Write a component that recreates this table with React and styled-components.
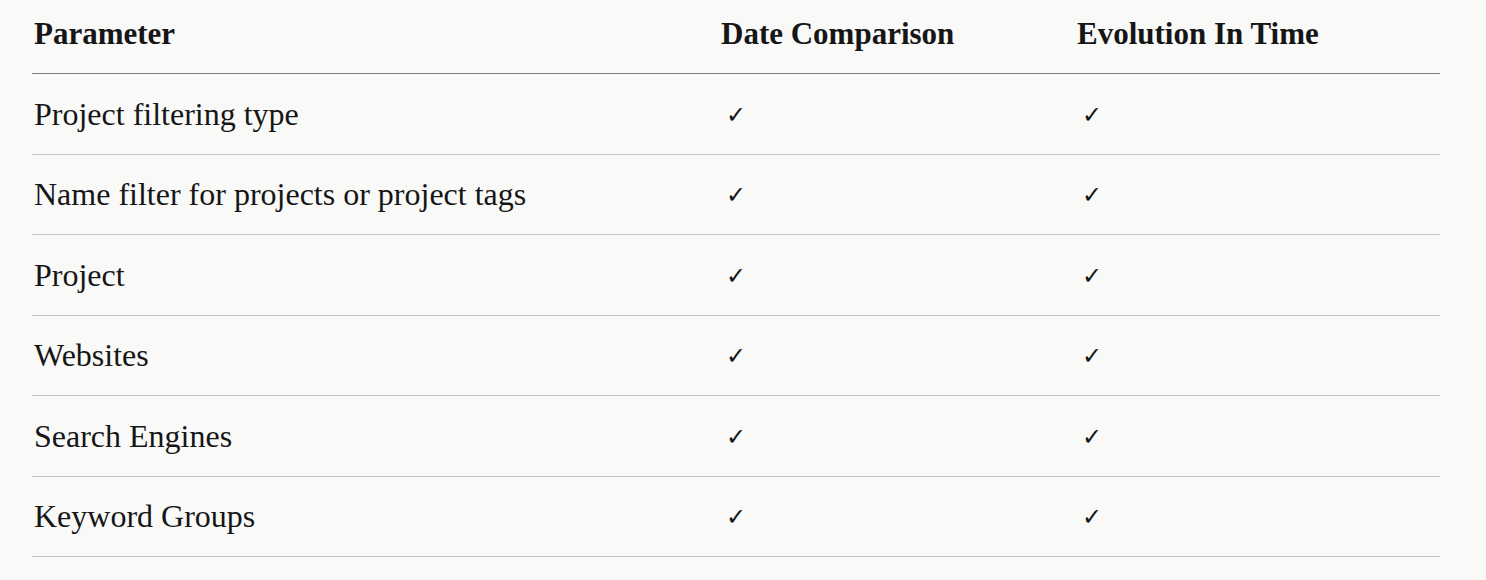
import styled, { createGlobalStyle } from 'styled-components';

const GlobalStyle = createGlobalStyle`
	html, body {
		margin: 0;
		padding: 0;
		background: #f9f9f8;
	}
	body {
		font-family: 'Liberation Serif', 'DejaVu Serif', serif;
		color: #161616;
	}
`;

const StyledWrapper = styled.div`
	padding: 0 46px 0 32px;
`;

const StyledRow = styled.div`
	display: grid;
	grid-template-columns: 687px 356px 1fr;
	align-items: center;
	height: ${(props) => (props.header ? '74px' : '80.5px')};
	border-bottom: 1px solid ${(props) => (props.header ? '#7a7a7a' : '#c4c4c4')};
	box-sizing: border-box;
	padding-left: 2px;
`;

const StyledHead = styled.div`
	font-size: 31px;
	font-weight: 700;
	padding-bottom: 6px;
`;

const StyledCell = styled.div`
	font-size: 32px;
	padding-top: 1px;
`;

const StyledCheck = styled.span`
	font-family: 'DejaVu Sans', sans-serif;
	font-size: 24px;
	font-weight: 300;
	padding-left: 5px;
	padding-top: 2px;
`;

const params = [
	'Project filtering type',
	'Name filter for projects or project tags',
	'Project',
	'Websites',
	'Search Engines',
	'Keyword Groups',
];

const App = () => (
	<>
		<GlobalStyle />
		<StyledWrapper>
			<StyledRow header>
				<StyledHead>Parameter</StyledHead>
				<StyledHead>Date Comparison</StyledHead>
				<StyledHead>Evolution In Time</StyledHead>
			</StyledRow>
			{params.map((item) => (
				<StyledRow key={item}>
					<StyledCell>{item}</StyledCell>
					<StyledCheck>✓</StyledCheck>
					<StyledCheck>✓</StyledCheck>
				</StyledRow>
			))}
		</StyledWrapper>
	</>
);

export default App;
